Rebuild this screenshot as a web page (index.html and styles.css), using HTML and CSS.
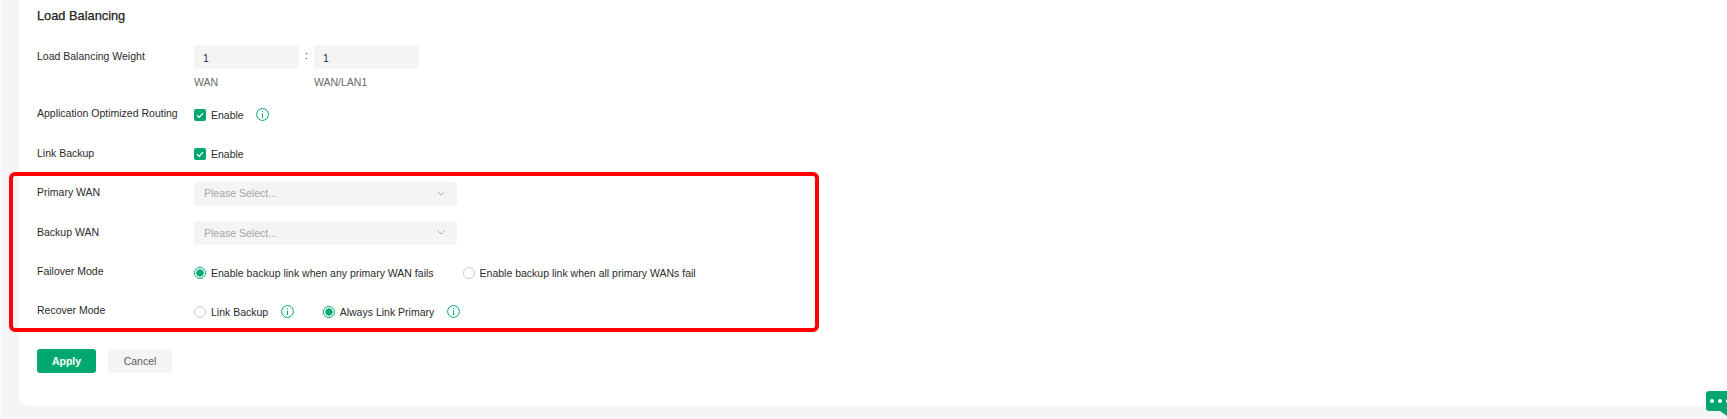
FILE: index.html
```html
<!DOCTYPE html>
<html lang="en">
<head>
  <meta charset="UTF-8">
  <title>Load Balancing</title>
  <link rel="stylesheet" href="styles.css">
</head>
<body>
  <div class="card">
    <h2 class="title">Load Balancing</h2>

    <div class="row row-weight">
      <div class="row-label">Load Balancing Weight</div>
      <div class="weights">
        <div class="weight">
          <div class="text-input">1</div>
          <div class="hint">WAN</div>
        </div>
        <span class="colon">:</span>
        <div class="weight">
          <div class="text-input">1</div>
          <div class="hint">WAN/LAN1</div>
        </div>
      </div>
    </div>

    <div class="row">
      <div class="row-label">Application Optimized Routing</div>
      <div class="controls">
        <span class="check">
          <svg viewBox="0 0 12 12"><path d="M3 6.2l2.2 2.1L9 4.2" fill="none" stroke="#fff" stroke-width="1.2"/></svg>
        </span>
        <span>Enable</span>
        <svg class="info" viewBox="0 0 13 13"><circle cx="6.5" cy="6.5" r="5.9" fill="none" stroke="#00a870"/><path d="M6.5 3v1.2M6.5 5.5V10" stroke="#00a870" fill="none"/></svg>
      </div>
    </div>

    <div class="row">
      <div class="row-label">Link Backup</div>
      <div class="controls">
        <span class="check">
          <svg viewBox="0 0 12 12"><path d="M3 6.2l2.2 2.1L9 4.2" fill="none" stroke="#fff" stroke-width="1.2"/></svg>
        </span>
        <span>Enable</span>
      </div>
    </div>

    <div class="row">
      <div class="row-label">Primary WAN</div>
      <div class="select">
        <span>Please Select...</span>
        <svg class="chevron" viewBox="0 0 8 5"><path d="M.5.5L4 4 7.5.5" fill="none" stroke="#aaa"/></svg>
      </div>
    </div>

    <div class="row">
      <div class="row-label">Backup WAN</div>
      <div class="select">
        <span>Please Select...</span>
        <svg class="chevron" viewBox="0 0 8 5"><path d="M.5.5L4 4 7.5.5" fill="none" stroke="#aaa"/></svg>
      </div>
    </div>

    <div class="row">
      <div class="row-label">Failover Mode</div>
      <div class="controls">
        <span class="radio on"></span>
        <span>Enable backup link when any primary WAN fails</span>
        <span class="radio off gap-failover"></span>
        <span>Enable backup link when all primary WANs fail</span>
      </div>
    </div>

    <div class="row">
      <div class="row-label">Recover Mode</div>
      <div class="controls">
        <span class="radio off"></span>
        <span>Link Backup</span>
        <svg class="info" viewBox="0 0 13 13"><circle cx="6.5" cy="6.5" r="5.9" fill="none" stroke="#00a870"/><path d="M6.5 3v1.2M6.5 5.5V10" stroke="#00a870" fill="none"/></svg>
        <span class="radio on gap-recover"></span>
        <span>Always Link Primary</span>
        <svg class="info" viewBox="0 0 13 13"><circle cx="6.5" cy="6.5" r="5.9" fill="none" stroke="#00a870"/><path d="M6.5 3v1.2M6.5 5.5V10" stroke="#00a870" fill="none"/></svg>
      </div>
    </div>

    <div class="actions">
      <button class="btn btn-primary" type="button">Apply</button>
      <button class="btn btn-cancel" type="button">Cancel</button>
    </div>
  </div>

  <div class="highlight"></div>

  <div class="chat">
    <span></span><span></span><span></span>
  </div>
</body>
</html>
```

FILE: styles.css
```css
html, body { margin: 0; height: 419px; overflow: hidden; }
body { position: relative; background: #f5f5f5; font-family: "Liberation Sans", Arial, sans-serif; font-size: 10.5px; color: #2b2b2b; border-left: 1px solid #fff; box-sizing: border-box; }
.card { margin-left: 18px; height: 406px; box-sizing: border-box; padding: 8px 37px 0 18px; background: #fff; border-radius: 0 0 0 10px; }
.title { margin: 0 0 21px; font-size: 12.8px; line-height: 16px; font-weight: 400; color: #222; -webkit-text-stroke: 0.25px #222; }

.row { display: grid; grid-template-columns: 157px 1fr; align-items: center; height: 39.4px; }
.row-label { padding-bottom: 3px; line-height: 14px; white-space: nowrap; }
.row-weight { height: 50.3px; align-items: start; }
.row-weight .row-label { padding-top: 4px; }

.weights { display: flex; }
.weight { width: 105px; }
.colon { width: 15px; text-align: center; line-height: 20px; color: #333; }
.text-input { height: 24px; line-height: 26px; padding-left: 9px; background: #f4f4f4; border-radius: 3px; color: #1d2b4f; }
.hint { margin-top: 6px; line-height: 14px; color: #6b6b6b; }

.controls { display: flex; align-items: center; height: 16px; }
.check { display: block; width: 12px; height: 12px; margin-right: 5px; background: #00a870; border-radius: 2px; }
.check svg { display: block; width: 12px; height: 12px; }
.info { display: block; width: 13px; height: 13px; margin-left: 12.5px; }

.radio { display: block; box-sizing: border-box; width: 12px; height: 12px; margin-right: 5px; border-radius: 50%; background: #fff; }
.radio.off { border: 1px solid #ccc; }
.radio.on { border: 1px solid #00a870; background: radial-gradient(circle, #00a870 0 3.4px, #fff 3.9px); }
.gap-failover { margin-left: 29px; }
.gap-recover { margin-left: 29px; }

.select { display: flex; align-items: center; justify-content: space-between; box-sizing: border-box; width: 263px; height: 24.5px; padding: 0 12px 1px 10px; background: #f4f4f4; border-radius: 3px; color: #a6a6a6; }
.chevron { display: block; width: 8px; height: 5px; }

.actions { display: flex; gap: 12px; margin-top: 17px; }
.btn { height: 24px; padding: 0; border: 0; border-radius: 3px; font-family: inherit; font-size: 10.5px; }
.btn-primary { width: 59px; background: #00a870; color: #fff; font-weight: 700; }
.btn-cancel { width: 64px; background: #f4f4f4; color: #5c5c5c; }

.highlight { position: absolute; left: 8px; top: 172px; width: 810px; height: 160px; box-sizing: border-box; border: 4px solid #f00; border-radius: 6px; }

.chat { position: absolute; left: 1705px; top: 391px; display: flex; align-items: center; gap: 4px; width: 30px; height: 20px; padding-left: 4px; background: #00a870; border-radius: 3px; }
.chat span { display: block; flex: none; width: 4px; height: 4px; background: #fff; border-radius: 50%; }
.chat::after { content: ""; position: absolute; left: 14px; bottom: -5px; border-top: 5px solid #00a870; border-left: 7px solid transparent; }
```
